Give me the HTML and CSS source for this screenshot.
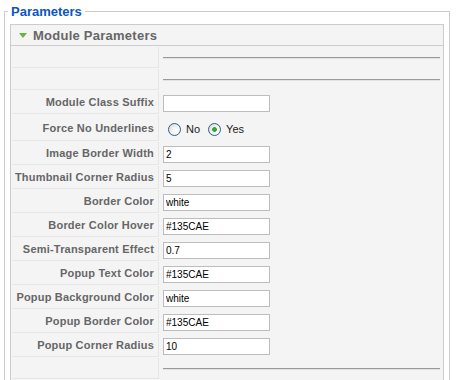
FILE: index.html
```html
<!DOCTYPE html>
<html>
<head>
<meta charset="utf-8">
<link rel="stylesheet" href="styles.css">
</head>
<body>
<fieldset class="params">
  <legend class="params-legend">Parameters</legend>
  <div class="panel">
    <h3 class="panel-title">
      <svg class="toggle" width="8" height="5" viewBox="0 0 8 5"><polygon points="0,0 8,0 4,5" fill="#6cb33e"/></svg>
      <span>Module Parameters</span>
    </h3>
    <table class="paramlist">
      <colgroup><col class="col-key"><col></colgroup>
      <tr class="row-spacer"><td class="key"></td><td class="value"><div class="sep"></div></td></tr>
      <tr class="row-spacer"><td class="key"></td><td class="value"><div class="sep"></div></td></tr>
      <tr class="row-field"><td class="key">Module Class Suffix</td><td class="value"><input class="text" type="text" value=""></td></tr>
      <tr class="row-radio"><td class="key">Force No Underlines</td><td class="value">
        <div class="radios">
          <label class="opt"><input class="radio" type="radio" name="fnu"><span>No</span></label>
          <label class="opt"><input class="radio" type="radio" name="fnu" checked><span>Yes</span></label>
        </div>
      </td></tr>
      <tr class="row-field"><td class="key">Image Border Width</td><td class="value"><input class="text" type="text" value="2"></td></tr>
      <tr class="row-field"><td class="key">Thumbnail Corner Radius</td><td class="value"><input class="text" type="text" value="5"></td></tr>
      <tr class="row-field"><td class="key">Border Color</td><td class="value"><input class="text" type="text" value="white"></td></tr>
      <tr class="row-field"><td class="key">Border Color Hover</td><td class="value"><input class="text" type="text" value="#135CAE"></td></tr>
      <tr class="row-field"><td class="key">Semi-Transparent Effect</td><td class="value"><input class="text" type="text" value="0.7"></td></tr>
      <tr class="row-field"><td class="key">Popup Text Color</td><td class="value"><input class="text" type="text" value="#135CAE"></td></tr>
      <tr class="row-field"><td class="key">Popup Background Color</td><td class="value"><input class="text" type="text" value="white"></td></tr>
      <tr class="row-field"><td class="key">Popup Border Color</td><td class="value"><input class="text" type="text" value="#135CAE"></td></tr>
      <tr class="row-field"><td class="key">Popup Corner Radius</td><td class="value"><input class="text" type="text" value="10"></td></tr>
      <tr class="row-spacer"><td class="key"></td><td class="value"><div class="sep"></div></td></tr>
      <tr class="row-field"><td class="key"></td><td class="value"></td></tr>
    </table>
  </div>
</fieldset>
</body>
</html>
```

FILE: styles.css
```css
html, body {
  margin: 0;
  padding: 0;
  background: #fff;
}
body {
  font-family: "Liberation Sans", Arial, sans-serif;
  font-size: 11px;
  color: #333;
}
.params {
  margin: 4px 9px 0 4px;
  padding: 0 5px 5px 5px;
  border: 1px solid #ccc;
  min-width: 0;
}
.params-legend {
  color: #0b55c4;
  font-size: 13px;
  font-weight: bold;
  padding: 0 3px;
  margin-left: -2px;
  line-height: 15px;
}
.panel {
  margin-top: 5px;
  border: 1px solid #ccc;
  background: #f4f4f4;
}
.panel-title {
  margin: 0;
  height: 20px;
  border-bottom: 1px solid #ccc;
  display: flex;
  align-items: center;
  gap: 6px;
  padding-left: 8px;
  font-size: 13px;
  font-weight: bold;
  color: #666;
  letter-spacing: 0.25px;
}
.toggle {
  display: block;
  margin-top: 1px;
}
.paramlist {
  width: 100%;
  border-collapse: separate;
  border-spacing: 1px;
  table-layout: fixed;
}
.col-key {
  width: 147px;
}
.paramlist td {
  box-sizing: border-box;
  padding: 0;
  vertical-align: middle;
}
.key {
  text-align: right;
  font-weight: bold;
  color: #666;
  letter-spacing: 0.2px;
  padding: 0 4px 0 2px !important;
  border-bottom: 1px solid #e6e6e6;
  border-right: 1px solid #e6e6e6;
  white-space: nowrap;
}
.value {
  padding: 0 2px 0 3px !important;
}
.row-spacer td { height: 21px; }
.row-field td { height: 23px; }
.row-radio td { height: 26px; }
.sep {
  height: 0;
  border-top: 1px solid #9a9a9a;
  border-bottom: 1px solid #e2e2e2;
}
.text {
  display: block;
  box-sizing: border-box;
  width: 107px;
  height: 17px;
  margin: 1px 0 0 0;
  padding: 0 2px;
  border: 1px solid #bdbdbd;
  background: #fff;
  font-family: "Liberation Sans", Arial, sans-serif;
  font-size: 10px;
  color: #000;
  outline: none;
}
.radios {
  display: flex;
  align-items: center;
  padding-left: 5px;
  margin-top: 2px;
}
.opt {
  display: flex;
  align-items: center;
  gap: 5px;
  margin-right: 8px;
  font-size: 11px;
  color: #222;
}
.radio {
  -webkit-appearance: none;
  appearance: none;
  margin: 0;
  width: 13px;
  height: 13px;
  box-sizing: border-box;
  border: 1px solid #2b5f93;
  border-radius: 50%;
  background: radial-gradient(circle at 65% 65%, #ffffff 0%, #f2f2ec 45%, #d3d3cb 100%);
}
.radio:checked {
  background:
    radial-gradient(circle at 50% 50%, #35b035 0, #2a9d2a 2px, rgba(0,0,0,0) 2.6px),
    radial-gradient(circle at 65% 65%, #ffffff 0%, #f2f2ec 45%, #d3d3cb 100%);
}
```
